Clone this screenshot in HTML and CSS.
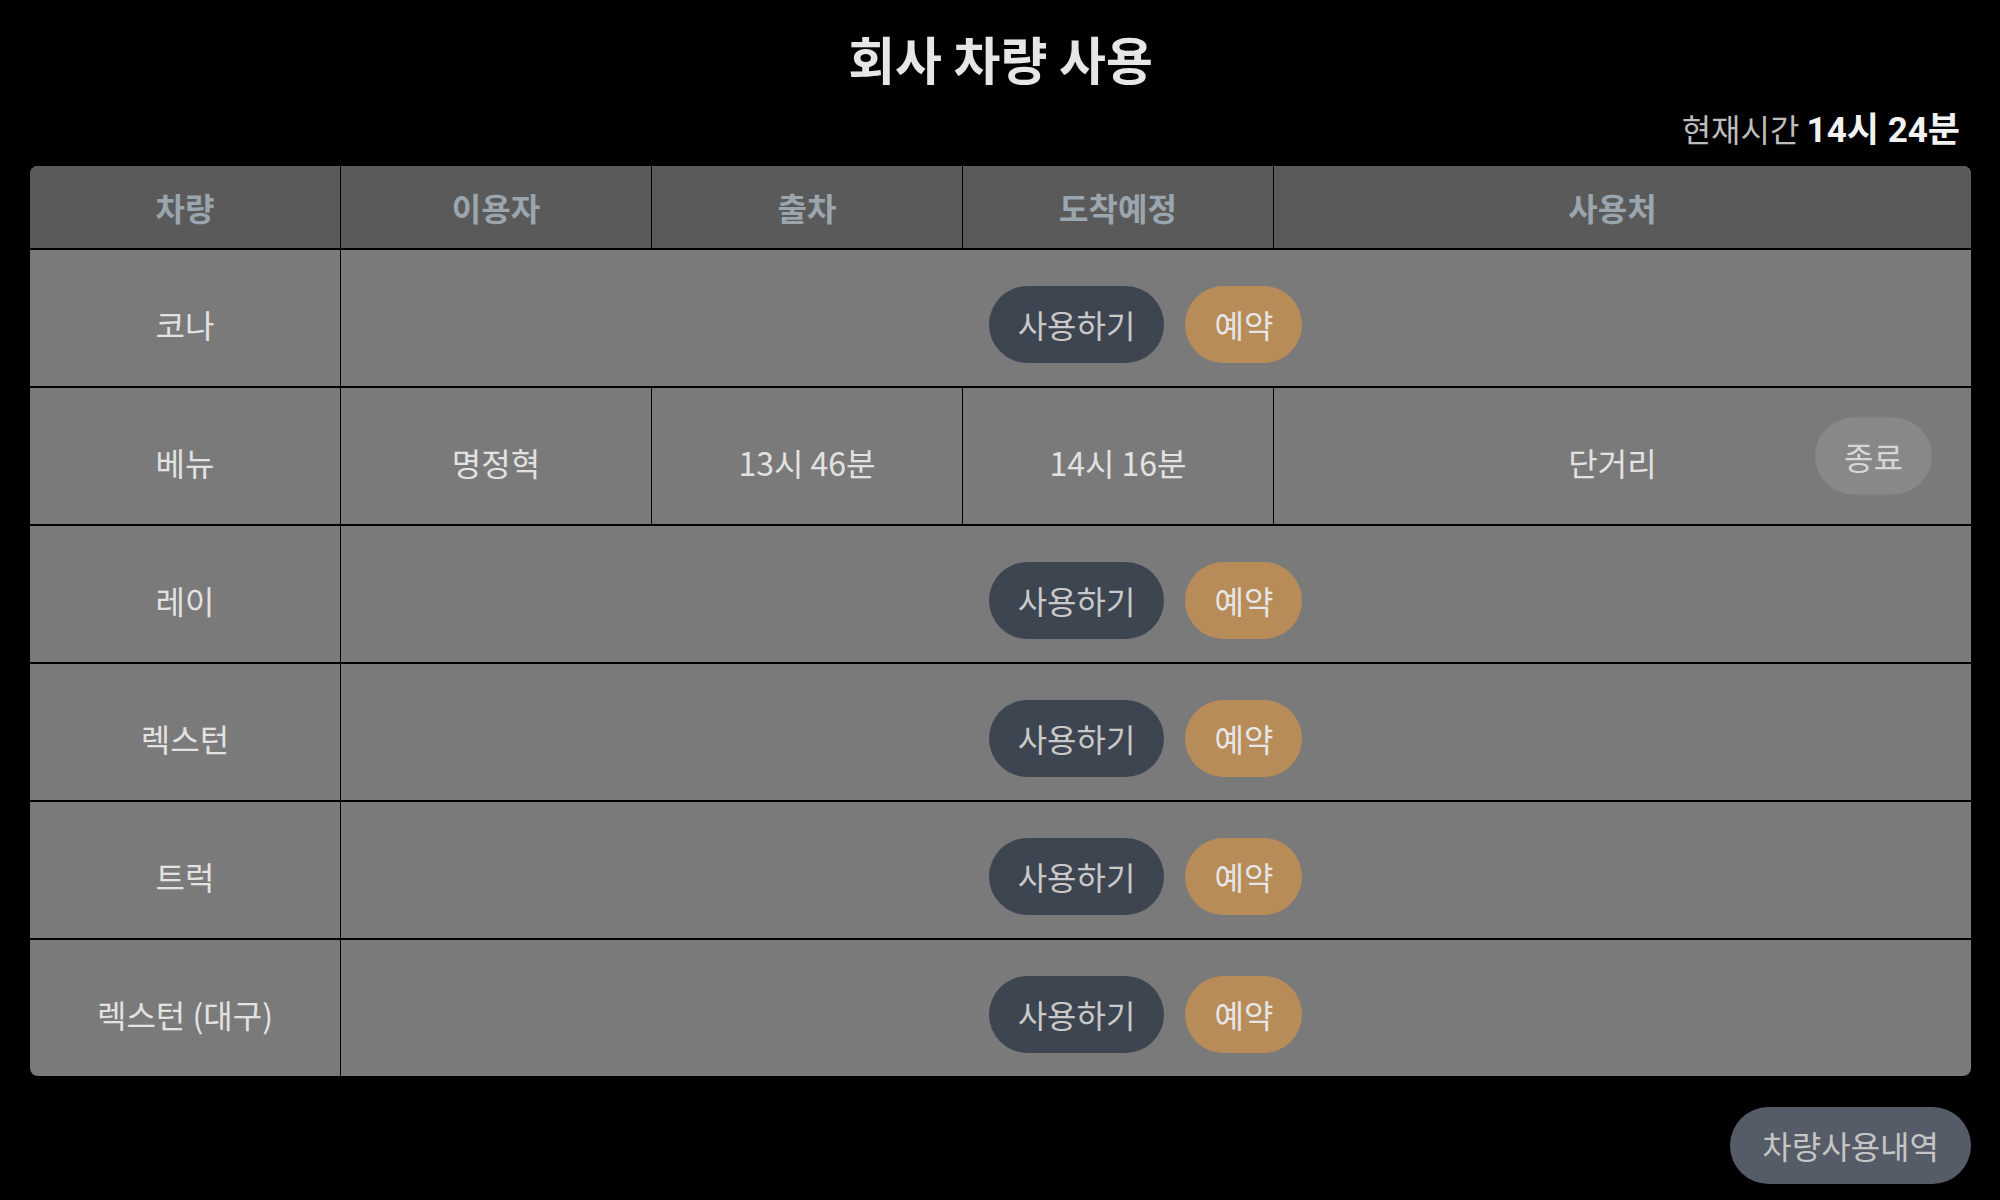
FILE: index.html
```html
<!DOCTYPE html>
<html>
    <head>
        <meta charset="UTF-8">
        <meta name="viewport" content="width=device-width, initial-scale=1.0">
        <title>회사 차량 사용</title>
        <link rel="stylesheet" href="styles.css">
    </head>
    <body>
        <div id="page">
            <h1 class="title">회사 차량 사용</h1>
            <div class="clock">현재시간 <b>14시 24분</b></div>
            <div class="board">
                <table>
                    <thead>
                        <tr>
                            <th class="col-car">차량</th>
                            <th class="col-user">이용자</th>
                            <th class="col-out">출차</th>
                            <th class="col-eta">도착예정</th>
                            <th class="col-place">사용처</th>
                        </tr>
                    </thead>
                    <tbody>
                        <tr>
                            <td>코나</td>
                            <td colspan="4">
                                <div class="actions">
                                    <button class="btn btn-use">사용하기</button>
                                    <button class="btn btn-book">예약</button>
                                </div>
                            </td>
                        </tr>
                        <tr>
                            <td>베뉴</td>
                            <td>명정혁</td>
                            <td>13시 46분</td>
                            <td>14시 16분</td>
                            <td class="place">
                                단거리
                                <button class="btn btn-end">종료</button>
                            </td>
                        </tr>
                        <tr>
                            <td>레이</td>
                            <td colspan="4">
                                <div class="actions">
                                    <button class="btn btn-use">사용하기</button>
                                    <button class="btn btn-book">예약</button>
                                </div>
                            </td>
                        </tr>
                        <tr>
                            <td>렉스턴</td>
                            <td colspan="4">
                                <div class="actions">
                                    <button class="btn btn-use">사용하기</button>
                                    <button class="btn btn-book">예약</button>
                                </div>
                            </td>
                        </tr>
                        <tr>
                            <td>트럭</td>
                            <td colspan="4">
                                <div class="actions">
                                    <button class="btn btn-use">사용하기</button>
                                    <button class="btn btn-book">예약</button>
                                </div>
                            </td>
                        </tr>
                        <tr>
                            <td>렉스턴 (대구)</td>
                            <td colspan="4">
                                <div class="actions">
                                    <button class="btn btn-use">사용하기</button>
                                    <button class="btn btn-book">예약</button>
                                </div>
                            </td>
                        </tr>
                    </tbody>
                </table>
            </div>
            <div class="footer">
                <button class="btn btn-history">차량사용내역</button>
            </div>
        </div>
    </body>
</html>
```

FILE: styles.css
```css
body {
    margin: 0;
    background-color: #000000;
    font-family: "Noto Sans CJK KR", "Noto Sans", sans-serif;
    color: #e2e2e2;
}

#page {
    padding: 23px 29px 0 30px;
}

.title {
    margin: 0;
    text-align: center;
    font-size: 51px;
    line-height: 70px;
    font-weight: 700;
    color: #e6e6e6;
}

.clock {
    margin-top: 12px;
    padding-right: 11px;
    text-align: right;
    font-size: 32px;
    line-height: 46px;
    color: #bdbdbd;
}

.clock b {
    font-family: Roboto, "Noto Sans CJK KR", sans-serif;
    font-size: 35px;
    font-weight: 700;
    color: #f2f2f2;
}

.board {
    margin-top: 12px;
    border-radius: 8px;
    overflow: hidden;
    background-color: #7a7a7a;
}

table {
    width: 100%;
    border-collapse: collapse;
    table-layout: fixed;
}

th,
td {
    border-left: 1px solid #000000;
    text-align: center;
    font-size: 32px;
    padding: 0;
}

th:first-child,
td:first-child {
    border-left: none;
}

th {
    height: 82px;
    background-color: #5a5a5a;
    color: #9aa5ad;
    font-weight: 700;
}

td {
    height: 124px;
    padding-top: 12px;
    border-top: 2px solid #000000;
    color: #e2e2e2;
    font-weight: 400;
}

.col-car,
.col-user,
.col-out,
.col-eta {
    width: 310px;
}

.col-place {
    padding-right: 20px;
}

.place {
    position: relative;
    padding-right: 20px;
}

.actions {
    display: flex;
    justify-content: center;
}

.btn {
    border: none;
    border-radius: 40px;
    padding: 17px 29px;
    font-family: "Noto Sans CJK KR", sans-serif;
    font-size: 32px;
    line-height: 43px;
    cursor: pointer;
}

.actions .btn {
    margin-right: 21px;
}

.btn-use {
    background-color: #3d4550;
    color: #c9c9c9;
}

.btn-book {
    background-color: #b88c58;
    color: #e6e6e6;
}

.btn-end {
    position: absolute;
    right: 39px;
    top: 50%;
    transform: translateY(-50%);
    background-color: #888888;
    color: #d6d6d6;
}

.footer {
    margin-top: 31px;
    display: flex;
    justify-content: flex-end;
}

.btn-history {
    padding: 17px 32px;
    background-color: #555c68;
    color: #c5c5c5;
}
```
